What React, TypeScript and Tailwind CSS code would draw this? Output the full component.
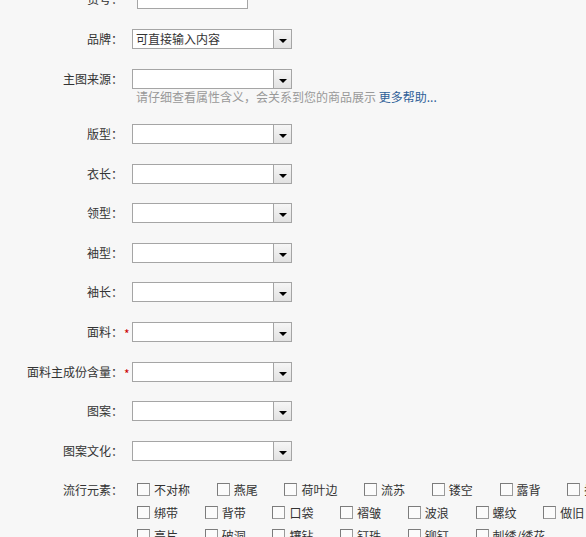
import { ReactNode } from 'react';

const font = { fontFamily: '"Noto Sans CJK SC", "Liberation Sans", sans-serif' };

function Select({ value }: { value?: string }) {
  return (
    <div className="flex h-5 w-[160px] border border-[#a5a5a5] bg-white">
      <div className="flex-1 overflow-hidden whitespace-nowrap pl-[3px] text-[12px] leading-[18px] text-[#333]">
        {value}
      </div>
      <div className="flex w-[18px] items-center justify-center border-l border-[#a5a5a5] bg-gradient-to-b from-[#f6f6f6] to-[#e2e2e2] pt-[3px]">
        <span className="h-0 w-0 border-x-[4px] border-t-[4px] border-x-transparent border-t-black" />
      </div>
    </div>
  );
}

function Row({
  label,
  required,
  className = '',
  children,
}: {
  label: string;
  required?: boolean;
  className?: string;
  children: ReactNode;
}) {
  return (
    <div className={`flex items-start ${className}`}>
      <div className="h-5 w-[123px] shrink-0 text-right text-[12px] leading-5 text-[#333]">{label}：</div>
      <div className="h-5 w-[9px] shrink-0 pl-px text-[12px] leading-[23px] text-[#c00]">{required ? '*' : ''}</div>
      <div>{children}</div>
    </div>
  );
}

function Check({ text }: { text: string }) {
  return (
    <label className="mr-[26.7px] flex shrink-0 items-center gap-1 whitespace-nowrap text-[12px] text-[#333]">
      <span className="h-[13px] w-[13px] border border-[#9a9a9a] border-l-[#7c7c7c] border-t-[#7c7c7c] bg-[#fbfbfb]" />
      {text}
    </label>
  );
}

const rows = [
  ['不对称', '燕尾', '荷叶边', '流苏', '镂空', '露背', '拼接'],
  ['绑带', '背带', '口袋', '褶皱', '波浪', '螺纹', '做旧'],
  ['亮片', '破洞', '镶钻', '钉珠', '铆钉', '刺绣/绣花'],
];

export default function App() {
  return (
    <div className="h-[537px] w-[586px] overflow-hidden bg-[#f7f7f7]" style={font}>
      <div className="-mt-[11px] flex flex-col gap-[19px]">
        <Row label="货号">
          <div className="ml-[5px] h-5 w-[111px] border border-[#a5a5a5] bg-white" />
        </Row>
        <Row label="品牌" className="mt-px">
          <Select value="可直接输入内容" />
        </Row>
        <Row label="主图来源" className="mt-px">
          <Select />
          <div className="whitespace-nowrap pl-[4px] text-[12px] leading-4 text-[#999]">
            请仔细查看属性含义，会关系到您的商品展示{' '}
            <a className="text-[#2f5f97]">更多帮助...</a>
          </div>
        </Row>
        <Row label="版型">
          <Select />
        </Row>
        <Row label="衣长" className="mt-px">
          <Select />
        </Row>
        <Row label="领型">
          <Select />
        </Row>
        <Row label="袖型" className="mt-px">
          <Select />
        </Row>
        <Row label="袖长">
          <Select />
        </Row>
        <Row label="面料" required className="mt-px">
          <Select />
        </Row>
        <Row label="面料主成份含量" required className="mt-px">
          <Select />
        </Row>
        <Row label="图案">
          <Select />
        </Row>
        <Row label="图案文化" className="mt-px">
          <Select />
        </Row>
        <div className="-mt-[2px] flex items-start">
          <div className="w-[123px] shrink-0 text-right text-[12px] leading-[23px] text-[#333]">流行元素：</div>
          <div className="flex flex-col pl-[14px]">
            {rows.map((r, i) => (
              <div key={i} className="flex h-[23px] items-center">
                {r.map((t) => (
                  <Check key={t} text={t} />
                ))}
              </div>
            ))}
          </div>
        </div>
      </div>
    </div>
  );
}
